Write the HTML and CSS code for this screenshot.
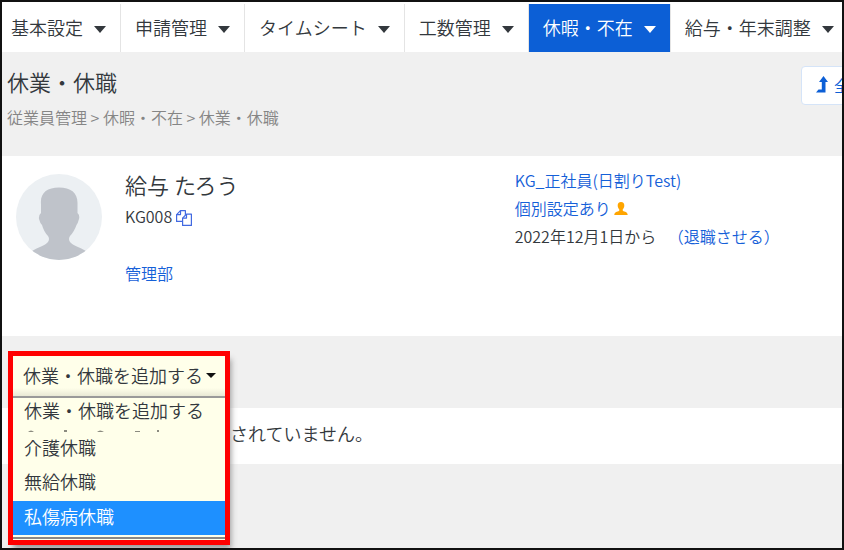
FILE: index.html
```html
<!DOCTYPE html>
<html lang="ja">
<head>
    <meta charset="UTF-8">
    <meta name="viewport" content="width=device-width, initial-scale=1.0">
    <title>休業・休職</title>
    <link rel="stylesheet" href="styles.css">
</head>
<body>
    <nav class="main-nav">
        <a class="nav-item" href="#">基本設定<span class="caret"></span></a>
        <a class="nav-item" href="#">申請管理<span class="caret"></span></a>
        <a class="nav-item" href="#">タイムシート<span class="caret"></span></a>
        <a class="nav-item" href="#">工数管理<span class="caret"></span></a>
        <a class="nav-item active" href="#">休暇・不在<span class="caret"></span></a>
        <a class="nav-item" href="#">給与・年末調整<span class="caret"></span></a>
    </nav>

    <header class="page-header">
        <div>
            <h1>休業・休職</h1>
            <p class="breadcrumb">従業員管理 &gt; 休暇・不在 &gt; 休業・休職</p>
        </div>
        <button class="all-button" type="button">
            <svg width="12" height="17" viewBox="0 0 12 17" aria-hidden="true">
                <path d="M7.5 0 12 6H9.500V16.500H0L2.500 13.500H5.800V6H3z" fill="#0c5fd6"/>
            </svg>
            <span>全</span>
        </button>
    </header>

    <main>
        <section class="profile">
            <svg class="avatar" viewBox="0 0 86 86" aria-hidden="true">
                <defs>
                    <clipPath id="avatar-clip"><circle cx="43" cy="43" r="43"/></clipPath>
                </defs>
                <circle cx="43" cy="43" r="43" fill="#ecf0f3"/>
                <path clip-path="url(#avatar-clip)" fill="#bfc3ca" d="M25 30C24 19 31 13.500 43 13.500S62 19 61.500 30V39Q64 41 63 45Q62 49 60.500 51Q58 58 54 62Q52 65 54 68C57 72 64 73 70 77V88H16V77C22 73 29 72 32 68Q34 65 32 62Q28 58 26 51Q24 49 23 45Q22.500 41 25 39Z"/>
            </svg>
            <div class="profile-name">
                <h2>給与 たろう</h2>
                <p>KG008
                    <svg class="copy-icon" width="16" height="16" viewBox="0 0 16 16" fill="#fff" stroke="#4169e1" stroke-width="1.200" stroke-linejoin="round" aria-hidden="true">
                        <path d="M4.500.600H9.400V11.400H.600V4.600Z"/>
                        <path d="M4.500.600V4.600H.600" fill="none"/>
                        <path d="M10.500 4.100H15.400V15.400H6.600V8.100Z"/>
                        <path d="M10.500 4.100V8.100H6.600" fill="none"/>
                    </svg>
                </p>
                <p class="department"><a href="#">管理部</a></p>
            </div>
            <div class="profile-info">
                <p><a href="#">KG_正社員(日割りTest)</a></p>
                <p><a href="#">個別設定あり</a>
                    <svg width="14" height="13" viewBox="0 0 14 13" fill="#ffa500" aria-hidden="true">
                        <path d="M7 0C9.200 0 10.500 1.500 10.300 4C10.200 6 9 7 8.600 7.800Q8.400 8.800 9.500 9.200C12 10 13.500 10.200 13.700 13H.300C.500 10.200 2 10 4.500 9.200Q5.600 8.800 5.400 7.800C5 7 3.800 6 3.700 4C3.500 1.500 4.800 0 7 0Z"/>
                    </svg>
                </p>
                <p>2022年12月1日から <a class="retire" href="#">（退職させる）</a></p>
            </div>
        </section>

        <div class="toolbar">
            <div class="leave-picker">
                <select class="leave-select" aria-label="休業・休職を追加する">
                    <option>休業・休職を追加する</option>
                </select>
                <ul class="leave-menu" role="listbox" aria-label="休業・休職を追加する">
                    <li role="option">休業・休職を追加する</li>
                    <li class="divider" role="presentation">
                        <svg width="160" height="2" viewBox="0 0 160 2" fill="#8b8b80" aria-hidden="true">
                            <path d="M4 2Q7-1 10 2zM40 0h3v2h-3zM73 2Q76-1 80 2zM111 1h5v1h-5zM133 0h2v2h-2z"/>
                        </svg>
                    </li>
                    <li role="option">介護休職</li>
                    <li role="option">無給休職</li>
                    <li class="selected" role="option" aria-selected="true">私傷病休職</li>
                </ul>
            </div>
        </div>

        <p class="empty-message">されていません。</p>
    </main>
</body>
</html>
```
FILE: styles.css
```css
* {
    box-sizing: border-box;
}

body {
    margin: 0;
    min-height: 100vh;
    border: 2px solid #111;
    background-color: #f0f0f0;
    color: #33383d;
    font-family: "Noto Sans CJK JP", sans-serif;
    font-weight: 350;
    font-size: 16px;
    overflow: hidden;
}

h1, h2, p, ul {
    margin: 0;
    padding: 0;
    font-weight: 350;
}

a {
    color: #1560d8;
    text-decoration: none;
}

/* Navigation */
.main-nav {
    display: flex;
    padding-top: 2px;
    background-color: #fff;
}

.nav-item {
    display: flex;
    flex: none;
    align-items: center;
    gap: 11px;
    height: 48px;
    padding: 0 14px 3px 14px;
    border-right: 1px solid #e4e4e4;
    color: #33383d;
    font-size: 18px;
    white-space: nowrap;
}

.nav-item:first-child {
    padding-left: 9px;
}

.nav-item:last-child {
    border-right: 0;
}

.nav-item.active {
    background-color: #0c5fd6;
    color: #fff;
}

.caret {
    margin-top: 5px;
    border: 6px solid transparent;
    border-top: 7px solid currentColor;
    border-bottom: 0;
}

/* Page header */
.page-header {
    display: flex;
    justify-content: space-between;
    height: 104px;
    padding: 14px 0 0 5px;
}

h1 {
    font-size: 22px;
    line-height: 30px;
}

.breadcrumb {
    margin-top: 9px;
    color: #858585;
    line-height: 24px;
}

.all-button {
    display: flex;
    align-items: center;
    gap: 6px;
    height: 39px;
    margin-right: -27px;
    padding: 0 18px 2px 14px;
    border: 1px solid #d5e4f8;
    border-radius: 4px;
    background-color: #fff;
    color: #0c5fd6;
    font: inherit;
}

/* Employee profile */
.profile {
    display: flex;
    height: 180px;
    padding: 18px 14px;
    background-color: #fff;
}

.avatar {
    flex: none;
    width: 86px;
    height: 86px;
}

.profile-name {
    flex: 0 0 48%;
    padding-left: 23px;
}

.profile-name h2 {
    font-size: 22px;
    line-height: 20px;
}

.profile-name p {
    margin-top: 10px;
    line-height: 24px;
}

.profile-name .department {
    margin-top: 33px;
}

.copy-icon {
    vertical-align: -3px;
}

.profile-info {
    margin-top: -8px;
    padding-left: 23px;
    line-height: 28px;
    white-space: nowrap;
}

.retire {
    margin-left: 8px;
}

/* Leave picker */
.toolbar {
    position: relative;
    height: 72px;
    padding: 15px 6px;
}

.leave-picker {
    position: absolute;
    width: 222px;
    border: 5px solid #f00;
    background-color: #ffffea;
    box-shadow: 3px 6px 6px -2px #999;
}

.leave-select {
    display: block;
    width: 100%;
    height: 40px;
    padding: 0 10px 3px;
    appearance: none;
    border: 0;
    color: #33383d;
    background: linear-gradient(#ffffea 80%, #e8e8d5);
    font: inherit;
    font-size: 18px;
}

.leave-picker::before {
    content: "";
    position: absolute;
    top: 17px;
    right: 9px;
    border: 5px solid transparent;
    border-top-color: #111;
    border-bottom: 0;
}

.leave-menu {
    margin-bottom: 1px;
    border-top: 2px solid #999;
    border-bottom: 2px solid #888;
    list-style: none;
    font-size: 18px;
    line-height: 30px;
}

.leave-menu li {
    padding: 0 11px 4px;
}

.leave-menu li:first-child {
    line-height: 24px;
    padding-bottom: 8px;
}

.leave-menu .divider {
    height: 2px;
    padding-bottom: 0;
}

.divider svg {
    display: block;
}

.leave-menu .selected {
    margin: 1px 0 2px;
    background-color: #1e90ff;
    color: #fff;
}

.empty-message {
    height: 56px;
    padding-left: 228px;
    background-color: #fff;
    font-size: 18px;
    line-height: 50px;
}
```
